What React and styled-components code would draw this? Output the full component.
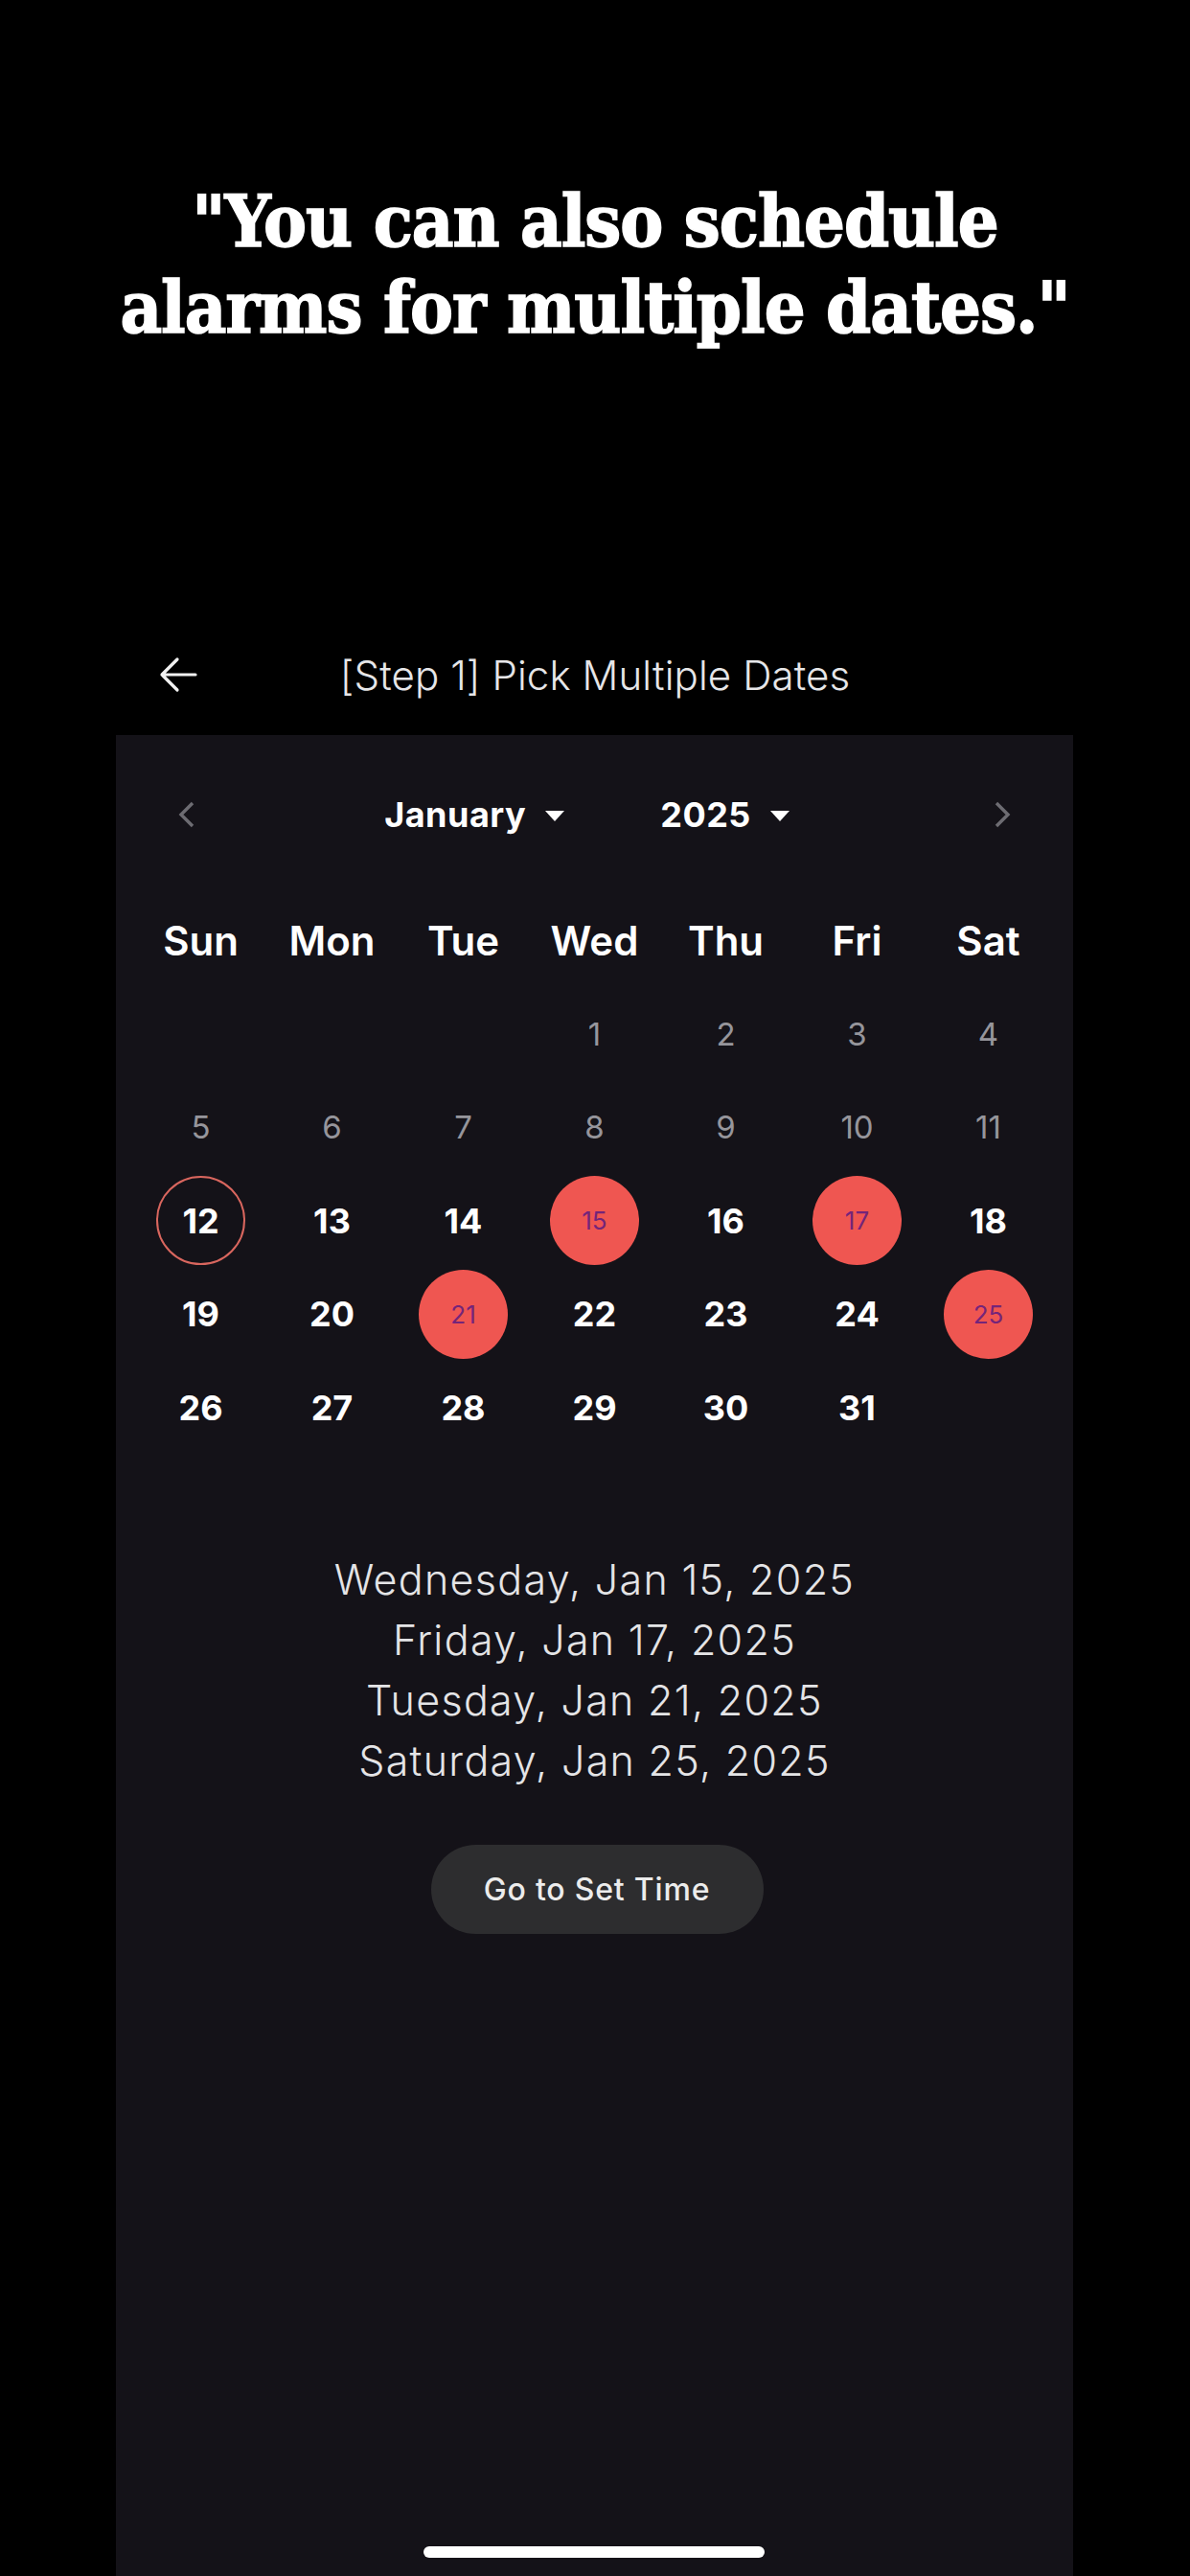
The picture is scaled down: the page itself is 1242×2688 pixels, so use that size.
import styled, { createGlobalStyle } from "styled-components";

const GlobalStyle = createGlobalStyle`
  html, body {
    margin: 0;
    padding: 0;
    background: #000;
  }
  body {
    font-family: Inter, "Noto Sans", sans-serif;
    -webkit-font-smoothing: antialiased;
  }
`;

const WEEKDAYS = ["Sun", "Mon", "Tue", "Wed", "Thu", "Fri", "Sat"];
const SELECTED = [15, 17, 21, 25];
const TODAY = 12;
const FIRST_WEEKDAY = 3; // Jan 1 2025 is a Wednesday

const picked = [
  "Wednesday, Jan 15, 2025",
  "Friday, Jan 17, 2025",
  "Tuesday, Jan 21, 2025",
  "Saturday, Jan 25, 2025",
];

const App = () => {
  const cells = [];
  for (let i = 0; i < FIRST_WEEKDAY; i++) cells.push(null);
  for (let d = 1; d <= 31; d++) cells.push(d);

  const kindOf = (d) => {
    if (SELECTED.includes(d)) return "selected";
    if (d === TODAY) return "today";
    if (d < TODAY) return "past";
    return "normal";
  };

  return (
    <>
      <GlobalStyle />
      <Page>
        <Headline>
          "You can also schedule
          <br />
          alarms for multiple dates."
        </Headline>

        <NavBar>
          <BackButton aria-label="back">
            <svg width="40" height="38" viewBox="0 0 40 38" fill="none">
              <path
                d="M38 19H3M19 3L3 19l16 16"
                stroke="#f2f2f2"
                strokeWidth="3.2"
                strokeLinecap="round"
                strokeLinejoin="round"
              />
            </svg>
          </BackButton>
          <NavTitle>[Step 1] Pick Multiple Dates</NavTitle>
          <span />
        </NavBar>

        <Panel>
          <MonthBar>
            <Chevron aria-label="previous month">
              <svg width="18" height="28" viewBox="0 0 18 28" fill="none">
                <path d="M15 2L3 14l12 12" stroke="#6d6c72" strokeWidth="3.4" />
              </svg>
            </Chevron>
            <Pickers>
              <Dropdown>
                January
                <Caret />
              </Dropdown>
              <Dropdown>
                2025
                <Caret />
              </Dropdown>
            </Pickers>
            <Chevron aria-label="next month">
              <svg width="18" height="28" viewBox="0 0 18 28" fill="none">
                <path d="M3 2l12 12L3 26" stroke="#6d6c72" strokeWidth="3.4" />
              </svg>
            </Chevron>
          </MonthBar>

          <WeekHeader>
            {WEEKDAYS.map((w) => (
              <WeekDay key={w}>{w}</WeekDay>
            ))}
          </WeekHeader>

          <DayGrid>
            {cells.map((d, i) => (
              <DayCell key={i}>
                {d && <Day $kind={kindOf(d)}>{d}</Day>}
              </DayCell>
            ))}
          </DayGrid>

          <PickedList>
            {picked.map((p) => (
              <li key={p}>{p}</li>
            ))}
          </PickedList>

          <ButtonRow>
            <SetTimeButton>Go to Set Time</SetTimeButton>
          </ButtonRow>

          <HomeIndicator />
        </Panel>
      </Page>
    </>
  );
};

const Page = styled.div`
  width: 1242px;
  min-height: 2688px;
  background: #000;
  display: flex;
  flex-direction: column;
`;

const Headline = styled.h1`
  margin: 0;
  padding-top: 186px;
  text-align: center;
  color: #fff;
  font-family: "DejaVu Serif Condensed", "DejaVu Serif", "Liberation Serif", serif;
  font-weight: 900;
  font-size: 75px;
  line-height: 90px;
  letter-spacing: -1px;
  -webkit-text-stroke: 1.5px #fff;
`;

const NavBar = styled.div`
  margin-top: 275px;
  height: 126px;
  display: grid;
  grid-template-columns: 1fr auto 1fr;
  align-items: center;
  padding: 0 0 0 166px;
`;

const BackButton = styled.button`
  justify-self: start;
  background: none;
  border: 0;
  padding: 0;
  display: flex;
  cursor: pointer;
`;

const NavTitle = styled.div`
  color: #e6e6e8;
  font-size: 42px;
  font-weight: 300;
  letter-spacing: 0.1px;
  margin-left: -166px;
`;

const Panel = styled.div`
  position: relative;
  flex: 1;
  margin: 0 122px 0 121px;
  background: #141218;
  display: flex;
  flex-direction: column;
`;

const MonthBar = styled.div`
  margin-top: 43px;
  height: 80px;
  display: flex;
  align-items: center;
  justify-content: space-between;
  padding: 0 65px;
`;

const Chevron = styled.button`
  background: none;
  border: 0;
  padding: 0;
  display: flex;
`;

const Pickers = styled.div`
  display: flex;
  align-items: center;
  gap: 100px;
  margin-left: -16px;
`;

const Dropdown = styled.div`
  display: flex;
  align-items: center;
  gap: 20px;
  color: #fff;
  font-size: 36px;
  font-weight: 700;
  letter-spacing: 0.5px;
`;

const Caret = styled.span`
  width: 0;
  height: 0;
  border-left: 10px solid transparent;
  border-right: 10px solid transparent;
  border-top: 11px solid #fff;
  margin-top: 2px;
`;

const WeekHeader = styled.div`
  margin-top: 51px;
  height: 80px;
  display: grid;
  grid-template-columns: repeat(7, 137px);
  padding: 0 20px;
  align-items: center;
`;

const WeekDay = styled.div`
  text-align: center;
  color: #fff;
  font-size: 42px;
  font-weight: 600;
`;

const DayGrid = styled.div`
  margin-top: 9px;
  display: grid;
  grid-template-columns: repeat(7, 137px);
  grid-auto-rows: 97.5px;
  padding: 0 20px;
`;

const DayCell = styled.div`
  display: flex;
  align-items: center;
  justify-content: center;
`;

const Day = styled.div`
  width: 93px;
  height: 93px;
  box-sizing: border-box;
  border-radius: 50%;
  display: flex;
  align-items: center;
  justify-content: center;
  font-size: ${(p) =>
    p.$kind === "selected" ? "26px" : p.$kind === "past" ? "33px" : "36px"};
  font-weight: ${(p) =>
    p.$kind === "selected" || p.$kind === "past" ? 400 : 700};
  color: ${(p) =>
    p.$kind === "selected" ? "#74247a" : p.$kind === "past" ? "#96959b" : "#fff"};
  background: ${(p) => (p.$kind === "selected" ? "#ef5651" : "transparent")};
  border: ${(p) => (p.$kind === "today" ? "2.5px solid #d9665e" : "none")};
`;

const PickedList = styled.ul`
  list-style: none;
  margin: 99px 0 0;
  padding: 0;
  text-align: center;
  color: #e4e4e6;
  font-size: 43px;
  font-weight: 300;
  line-height: 63px;
  letter-spacing: 1.3px;
`;

const ButtonRow = styled.div`
  margin-top: 56px;
  display: flex;
  justify-content: center;
`;

const SetTimeButton = styled.button`
  width: 347px;
  height: 93px;
  border: 0;
  border-radius: 47px;
  background: #2d2d2f;
  color: #ececec;
  font-family: Inter, sans-serif;
  font-size: 32px;
  font-weight: 500;
  letter-spacing: 0.8px;
  margin-left: 5px;
`;

const HomeIndicator = styled.div`
  position: absolute;
  left: 321px;
  bottom: 19px;
  width: 356px;
  height: 12px;
  border-radius: 6px;
  background: #fff;
`;

export default App;
